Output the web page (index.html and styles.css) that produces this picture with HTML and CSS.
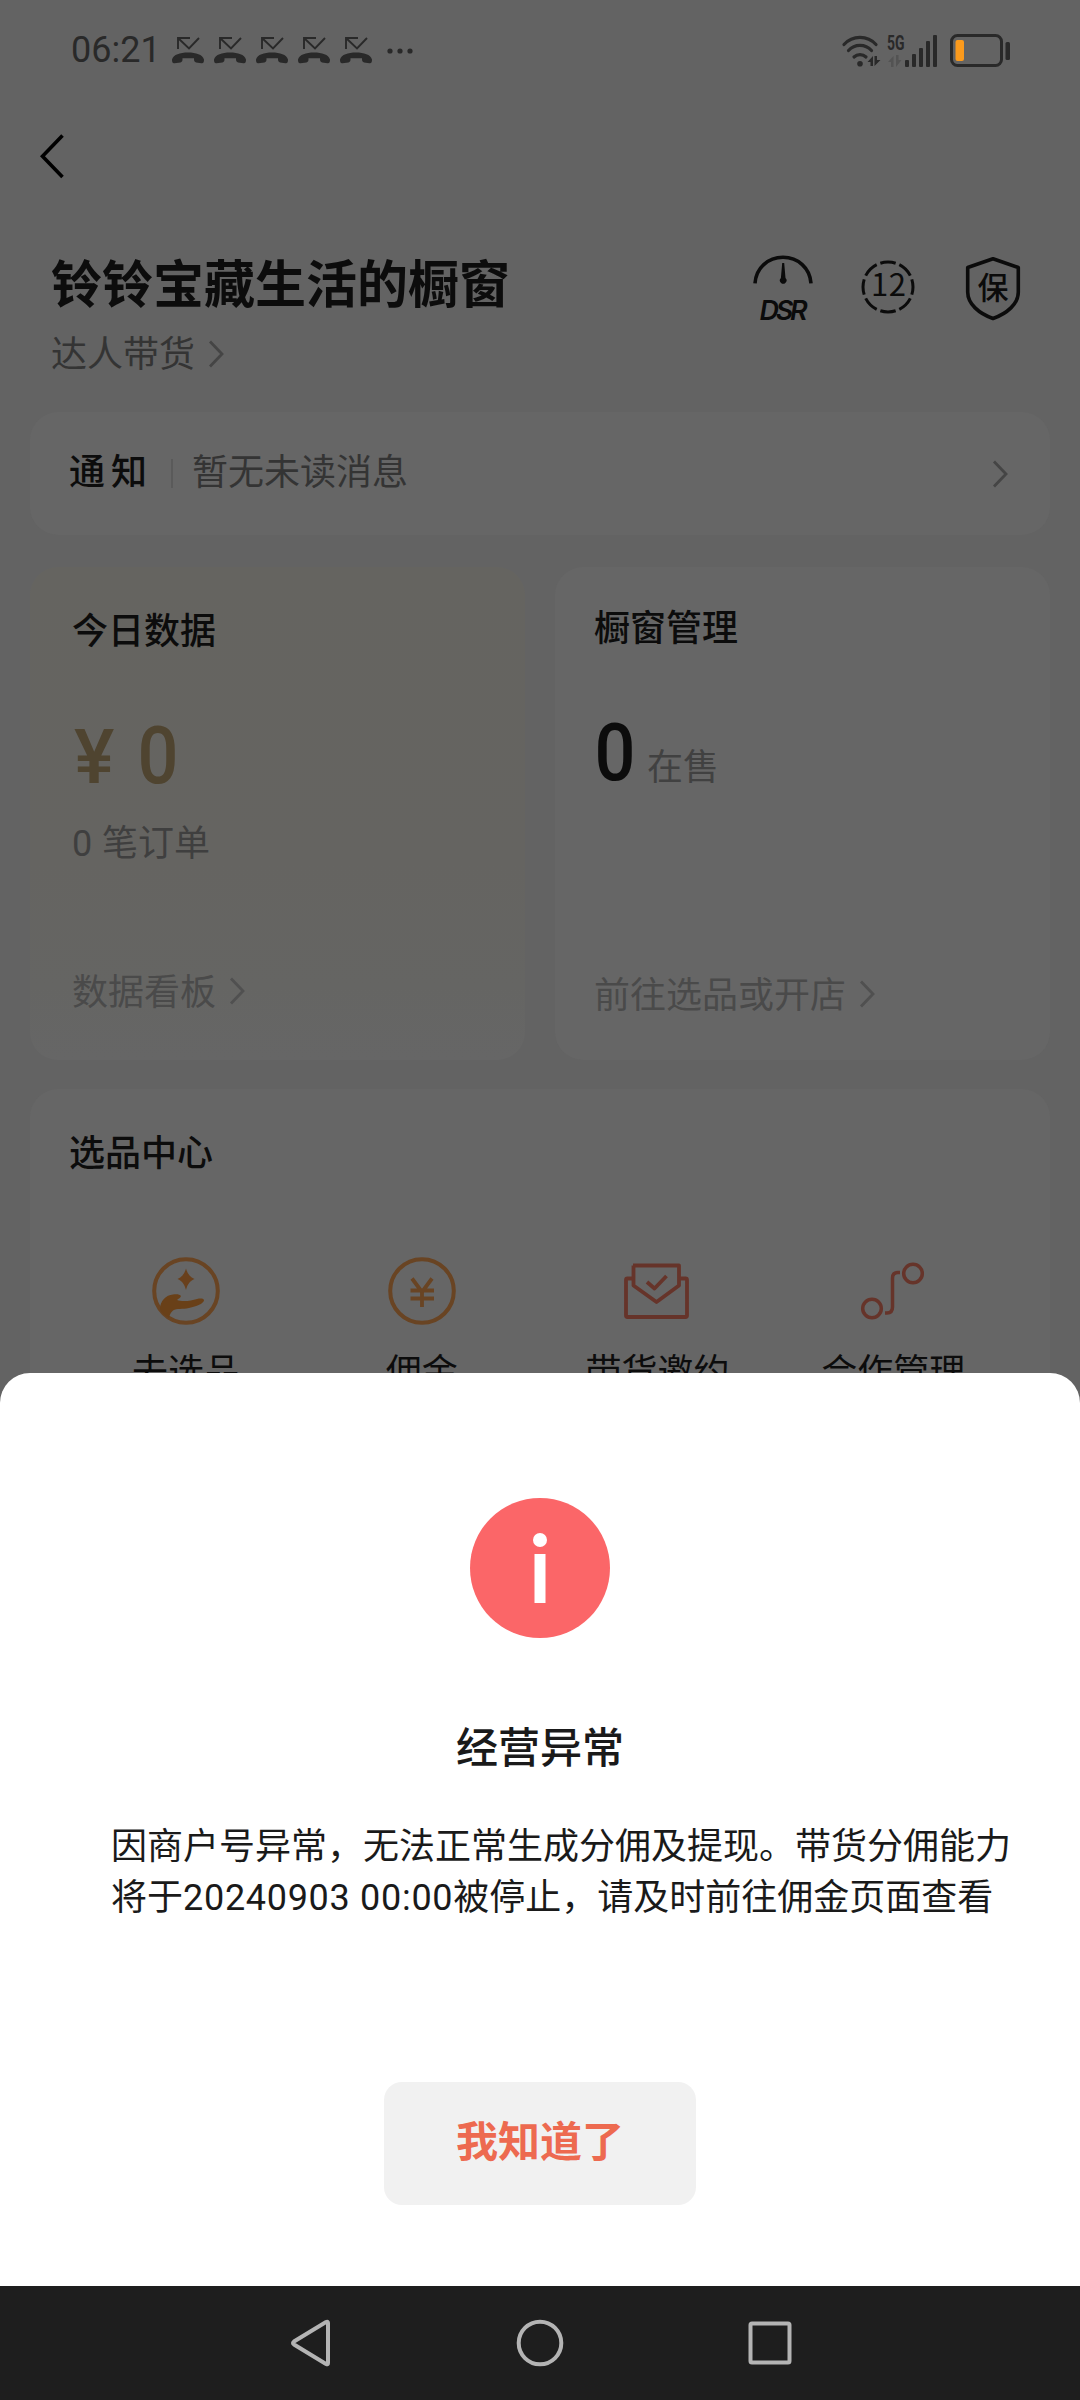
FILE: index.html
```html
<!DOCTYPE html>
<html lang="zh-CN">
<head>
<meta charset="utf-8">
<title>橱窗</title>
<link rel="stylesheet" href="styles.css">
</head>
<body>
<svg class="defs" width="0" height="0">
  <symbol id="missed" viewBox="0 0 32 28">
    <path d="M6 13V2h12M6 2l11 10.500L27 2" fill="none" stroke="#292929" stroke-width="1.900"/>
    <path d="M0 23.500C1.500 18.500 8 16.500 16 16.500S30.500 18.500 32 23.500C32 26 31.500 27.500 29.500 27.200L24 26.400C22 26 22 24.500 22 22.300H10.500C10.500 24.500 10.500 26 8.500 26.400L2.500 27.200C.5 27.500 0 26 0 23.500Z" fill="#292929"/>
  </symbol>
  <symbol id="chevron" viewBox="0 0 16 30">
    <path d="M2 2.500L14 15L2 27.500" fill="none" stroke="currentColor" stroke-width="2.800"/>
  </symbol>
</svg>
<div class="screen">
  <div class="status">
    <span class="clock">06:21</span>
    <div class="calls">
      <svg><use href="#missed"/></svg><svg><use href="#missed"/></svg><svg><use href="#missed"/></svg><svg><use href="#missed"/></svg><svg><use href="#missed"/></svg>
    </div>
    <svg class="dots" width="26" height="6"><circle cx="3" cy="3" r="2.600"/><circle cx="13" cy="3" r="2.600"/><circle cx="23" cy="3" r="2.600"/></svg>
    <svg class="signals" width="170" height="34" viewBox="841 33 170 34">
      <g fill="none" stroke="#292929" stroke-width="3.200" stroke-linecap="round">
        <path d="M844 44.500a21.500 21.500 0 0 1 32 0M848.500 50.500a15.500 15.500 0 0 1 23 0M854 57a8.600 8.600 0 0 1 12 0"/>
      </g>
      <g fill="#292929">
        <circle cx="860" cy="63.700" r="2.800"/>
        <path d="M867.500 62l5.500-6v10h-2.500v-4zM874.500 56h2.500v4h3.500l-6 6z"/>
        <path d="M888 62l5.500-6v11h-2.500v-5zM896 55h2.500v5h3l-5.500 7z" fill="#535353"/>
        <rect x="905" y="60" width="4" height="7" rx="1"/><rect x="912" y="54" width="4" height="13" rx="1"/><rect x="919" y="48" width="4" height="19" rx="1"/><rect x="926" y="41" width="4" height="26" rx="1"/><rect x="933" y="35" width="4" height="32" rx="1"/>
        <rect x="1005.500" y="42" width="4.500" height="18" rx="1.500"/>
      </g>
      <text x="887" y="49.500" font-family="Roboto" font-weight="700" font-size="20" fill="#292929" textLength="17.500" lengthAdjust="spacingAndGlyphs">5G</text>
      <rect x="951.500" y="35.500" width="50" height="30" rx="6" fill="none" stroke="#292929" stroke-width="3"/>
      <rect x="955.500" y="40" width="8.500" height="21" rx="2" fill="#fb9a1c"/>
    </svg>
  </div>

  <svg class="back" width="26" height="44"><path d="M22.500 1.500L2.500 22.300L22.500 43" fill="none" stroke="#000" stroke-width="3.600"/></svg>

  <header class="header">
    <div>
      <h1 class="shop">铃铃宝藏生活的橱窗</h1>
      <div class="role">达人带货<svg class="chev"><use href="#chevron"/></svg></div>
    </div>
    <div class="badges">
      <svg width="64" height="72" viewBox="751 251 64 72">
        <path d="M755 283.300C756 268 768 257.300 783 257.300S810 268 811 283.300" fill="none" stroke="#0b0b0b" stroke-width="3.600"/>
        <path d="M782.200 263h2l1.300 15a3.300 3.300 0 1 1-4.600 0z" fill="#0b0b0b"/>
        <text x="759.500" y="319.500" font-family="Inter" font-style="italic" font-weight="600" font-size="27" fill="#0b0b0b" textLength="48" lengthAdjust="spacing">DSR</text>
      </svg>
      <svg width="56" height="72" viewBox="860 251 56 72">
        <circle cx="888" cy="287" r="25" fill="none" stroke="#0b0b0b" stroke-width="3" pathLength="80" stroke-dasharray="8 2" stroke-dashoffset="4"/>
        <text x="871" y="295.500" font-family="Noto Sans CJK SC" font-size="31" fill="#0b0b0b" textLength="35" lengthAdjust="spacing">12</text>
      </svg>
      <svg width="58" height="72" viewBox="964 251 58 72">
        <path d="M993 258.800L1018.300 267.500V292C1018.300 304 1007 313.500 993 318.500C979 313.500 967.700 304 967.700 292V267.500Z" fill="none" stroke="#0b0b0b" stroke-width="3.600" stroke-linejoin="round"/>
        <text x="977.500" y="298.500" font-family="Noto Sans CJK SC" font-weight="500" font-size="31" fill="#0b0b0b">保</text>
      </svg>
    </div>
  </header>

  <section class="card notice">
    <b class="notice-label">通知</b><i class="bar"></i><span class="notice-text">暂无未读消息</span>
    <svg class="chev"><use href="#chevron"/></svg>
  </section>

  <div class="pair">
    <section class="card today">
      <h2>今日数据</h2>
      <div class="value gold"><span class="yen">¥</span><span class="figure">0</span></div>
      <div class="orders"><span class="num">0</span>笔订单</div>
      <div class="more">数据看板<svg class="chev"><use href="#chevron"/></svg></div>
    </section>
    <section class="card manage">
      <h2>橱窗管理</h2>
      <div class="value"><span class="figure">0</span><small>在售</small></div>
      <div class="more">前往选品或开店<svg class="chev"><use href="#chevron"/></svg></div>
    </section>
  </div>

  <section class="card center">
    <h2>选品中心</h2>
    <div class="tools">
      <div class="tool">
        <svg width="70" height="70" viewBox="0 0 70 70">
          <circle cx="35" cy="35" r="31.800" fill="none" stroke="#694423" stroke-width="4"/>
          <path d="M35 12.500C36.500 18 39 21 43.500 23C39 25 36.500 28 35 34C33.500 28 31 25 26.500 23C31 21 33.500 18 35 12.500Z" fill="#69401c"/>
          <path d="M9 53C9 45 15 39 22 38.500C26 38 29 38.500 30 40C29.500 42 27.500 42.500 26 44C31 46 40 45 46 43C50 42 53 42.500 53 44.500C52 48 46 50 38 52C31 53.500 26 52 22 54.500C19.500 57 18.500 59 18 62C14 60 10 57 9 53Z" fill="#694018"/>
        </svg>
        <span>去选品</span>
      </div>
      <div class="tool">
        <svg width="70" height="70" viewBox="0 0 70 70">
          <circle cx="35" cy="35" r="31.800" fill="none" stroke="#694423" stroke-width="4"/>
          <path d="M25 22.500L35 36L45 22.500M35 35V51M23.500 34.500H47M23.500 42.500H47" fill="none" stroke="#694423" stroke-width="3.800"/>
        </svg>
        <span>佣金</span>
      </div>
      <div class="tool">
        <svg width="70" height="70" viewBox="0 0 70 70">
          <g fill="none" stroke="#66342a" stroke-width="3.800" stroke-linejoin="round">
            <path d="M11 9.500H57V29.500L34.500 46L11.500 29.500V9.500M11.500 22.500H5.500Q4 22.500 4 24V59.500Q4 61 5.500 61H63.500Q65 61 65 59.500V24Q65 22.500 63.500 22.500H57"/>
            <path d="M25 26L32.500 32.500L44.500 20"/>
          </g>
        </svg>
        <span>带货邀约</span>
      </div>
      <div class="tool">
        <svg width="70" height="70" viewBox="0 0 70 70">
          <g fill="none" stroke="#66342a" stroke-width="3.500">
            <circle cx="55" cy="17.500" r="9.300"/><circle cx="14" cy="52.500" r="9.300"/>
            <path d="M42 16.500H40Q34.500 16.500 34.500 22V51Q34.500 57 29 57H27"/>
          </g>
        </svg>
        <span>合作管理</span>
      </div>
    </div>
  </section>

  <div class="overlay">
    <section class="sheet">
      <svg width="140" height="140"><circle cx="70" cy="70" r="70" fill="#fb6668"/><circle cx="70" cy="42" r="7" fill="#fff"/><rect x="64.500" y="56" width="11" height="49" fill="#fff"/></svg>
      <h3>经营异常</h3>
      <p>因商户号异常，无法正常生成分佣及提现。带货分佣能力<br>将于<span class="digits">20240903 00:00</span>被停止，请及时前往佣金页面查看</p>
      <button>我知道了</button>
    </section>
    <nav class="navbar">
      <svg width="48" height="50"><path d="M41 5V45Q41 47 39 46L7 26.500Q5 25 7 23.500L39 4Q41 3 41 5Z"/></svg>
      <svg width="50" height="50"><circle cx="25" cy="25" r="21.300"/></svg>
      <svg width="50" height="50"><rect x="5.500" y="5.500" width="39" height="39" rx="1.500"/></svg>
    </nav>
  </div>
</div>
</body>
</html>
```
FILE: styles.css
```css
* { box-sizing: border-box; margin: 0; padding: 0; }
body {
  width: 1080px;
  height: 2400px;
  overflow: hidden;
  background: #636363;
  font-family: "Noto Sans CJK SC", sans-serif;
  font-size: 36px;
  line-height: 40px;
  color: #0c0c0c;
}
svg { display: block; flex: none; overflow: visible; }
.defs { position: absolute; }
.screen { position: relative; height: 2400px; overflow: hidden; }

.status { display: flex; align-items: center; height: 100px; padding: 0 69px 0 71px; }
.clock { width: 101px; font-family: Roboto, sans-serif; font-size: 36px; color: #292929; }
.calls { display: flex; gap: 10px; }
.calls svg { width: 32px; height: 28px; }
.dots { margin-left: 15px; margin-top: 1px; fill: #292929; }
.signals { margin-left: auto; }

.back { margin: 34px 0 0 40px; }

.header { display: flex; justify-content: space-between; height: 161px; margin-top: 73px; padding: 0 58px 0 51px; }
.shop { font-size: 51px; line-height: 60px; font-weight: 700; }
.role { display: flex; align-items: center; margin-top: 20px; margin-bottom: 41px; color: #343434; }
.badges { display: flex; }
.badges svg + svg { margin-left: 45px; }
.badges svg + svg + svg { margin-left: 48px; }

.chev { width: 16px; height: 30px; margin-left: 13px; margin-top: 6px; color: #454545; }

.card { background: #666; border-radius: 28px; }
.notice { display: flex; align-items: center; height: 123px; margin: 0 30px; padding: 0 42px 0 39px; }
.notice-label { font-weight: 500; letter-spacing: 6px; margin-bottom: 9px; }
.bar { width: 2px; height: 29px; margin: 0 19px 0 18px; background: #5a5a5a; }
.notice-text { color: #343434; margin-bottom: 9px; }
.notice .chev { margin: 0 0 0 auto; color: #454545; }

.pair { display: grid; grid-template-columns: 495px 495px; gap: 30px; margin: 32px 30px 0; height: 493px; }
h2 { font-size: 36px; line-height: 40px; font-weight: 500; }
.today { padding: 41px 42px; background: linear-gradient(#656460, #656461 60%, #656563 85%, #666); }
.manage { padding: 38px 39px; }
.value { display: flex; align-items: baseline; height: 80px; line-height: 80px; margin-top: 68px; font-family: Roboto, sans-serif; font-size: 80px; font-weight: 500; }
.gold { color: #4f4430; }
.yen { width: 66px; padding-left: 2px; font-size: 76px; }
.figure { width: 48px; transform: scaleX(0.900); transform-origin: 50% 50%; }
.gold .figure { margin-left: -3px; }
.value small { font-family: "Noto Sans CJK SC", sans-serif; font-size: 36px; font-weight: 400; line-height: 40px; margin-left: 6px; color: #414141; }
.manage .figure { margin-left: -2px; }
.manage .value small { margin-left: 7px; }
.orders { margin-top: 24px; color: #3f3f3f; }
.num { display: inline-block; width: 30px; font-family: Roboto, sans-serif; }
.more { display: flex; align-items: center; height: 40px; color: #4a4a4a; }
.more .chev { margin-top: 4px; color: #505050; }
.today .more { margin-top: 105px; }
.manage .more { margin-top: 179px; }

.center { height: 500px; margin: 29px 30px 0; padding: 41px 38px; }
.center h2 { padding-left: 1px; }
.tools { display: grid; grid-template-columns: repeat(4, 235.800px); margin-top: 86px; }
.tool { display: flex; flex-direction: column; align-items: center; }
.tool span { margin-top: 23px; }

.overlay { position: absolute; left: 0; right: 0; bottom: 0; }
.sheet { display: flex; flex-direction: column; align-items: center; height: 913px; padding-top: 125px; background: #fff; border-radius: 30px 30px 0 0; color: #1a1a1a; }
h3 { font-size: 42px; line-height: 50px; font-weight: 500; margin-top: 82px; }
.sheet p { align-self: stretch; padding-left: 111px; line-height: 51px; margin-top: 48px; white-space: nowrap; }
.digits { font-family: Roboto, sans-serif; letter-spacing: 0.700px; }
.sheet button { width: 312px; height: 123px; margin-top: 158px; padding-bottom: 9px; border: 0; border-radius: 18px; background: #f1f1f1; color: #ed6a50; font: 700 42px/50px "Noto Sans CJK SC", sans-serif; }
.navbar { display: flex; align-items: center; justify-content: center; gap: 180px; height: 114px; padding-left: 2px; background: #1e1e1e; }
.navbar svg { fill: none; stroke: #b4b4b4; stroke-width: 4px; }
.navbar svg:first-child { margin-left: -4px; }
.navbar svg:last-child { margin-right: -4px; }
```
